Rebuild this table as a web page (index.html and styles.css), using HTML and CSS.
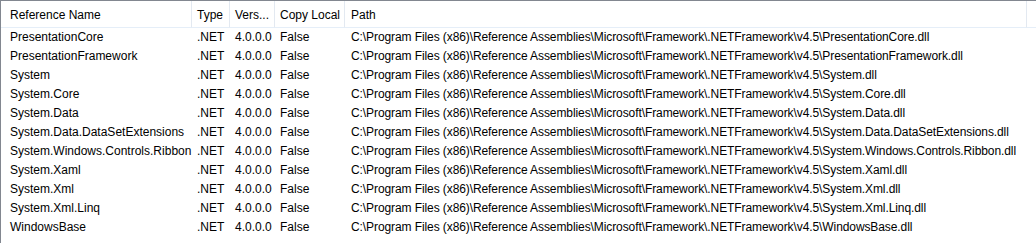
FILE: index.html
```html
<!DOCTYPE html>
<html>
<head>
<meta charset="utf-8">
<link rel="stylesheet" href="styles.css">
</head>
<body>
<div class="list">
  <table class="grid">
    <colgroup>
      <col class="c-name"><col class="c-type"><col class="c-ver"><col class="c-copy"><col class="c-path"><col class="c-rest">
    </colgroup>
    <thead>
      <tr>
        <th class="first">Reference Name</th>
        <th>Type</th>
        <th>Vers...</th>
        <th>Copy Local</th>
        <th class="path">Path</th>
        <th class="rest"></th>
      </tr>
    </thead>
    <tbody>
      <tr><td class="first">PresentationCore</td><td>.NET</td><td>4.0.0.0</td><td>False</td><td class="path">C:\Program Files (x86)\Reference Assemblies\Microsoft\Framework\.NETFramework\v4.5\PresentationCore.dll</td><td></td></tr>
      <tr><td class="first">PresentationFramework</td><td>.NET</td><td>4.0.0.0</td><td>False</td><td class="path">C:\Program Files (x86)\Reference Assemblies\Microsoft\Framework\.NETFramework\v4.5\PresentationFramework.dll</td><td></td></tr>
      <tr><td class="first">System</td><td>.NET</td><td>4.0.0.0</td><td>False</td><td class="path">C:\Program Files (x86)\Reference Assemblies\Microsoft\Framework\.NETFramework\v4.5\System.dll</td><td></td></tr>
      <tr><td class="first">System.Core</td><td>.NET</td><td>4.0.0.0</td><td>False</td><td class="path">C:\Program Files (x86)\Reference Assemblies\Microsoft\Framework\.NETFramework\v4.5\System.Core.dll</td><td></td></tr>
      <tr><td class="first">System.Data</td><td>.NET</td><td>4.0.0.0</td><td>False</td><td class="path">C:\Program Files (x86)\Reference Assemblies\Microsoft\Framework\.NETFramework\v4.5\System.Data.dll</td><td></td></tr>
      <tr><td class="first">System.Data.DataSetExtensions</td><td>.NET</td><td>4.0.0.0</td><td>False</td><td class="path">C:\Program Files (x86)\Reference Assemblies\Microsoft\Framework\.NETFramework\v4.5\System.Data.DataSetExtensions.dll</td><td></td></tr>
      <tr><td class="first">System.Windows.Controls.Ribbon</td><td>.NET</td><td>4.0.0.0</td><td>False</td><td class="path">C:\Program Files (x86)\Reference Assemblies\Microsoft\Framework\.NETFramework\v4.5\System.Windows.Controls.Ribbon.dll</td><td></td></tr>
      <tr><td class="first">System.Xaml</td><td>.NET</td><td>4.0.0.0</td><td>False</td><td class="path">C:\Program Files (x86)\Reference Assemblies\Microsoft\Framework\.NETFramework\v4.5\System.Xaml.dll</td><td></td></tr>
      <tr><td class="first">System.Xml</td><td>.NET</td><td>4.0.0.0</td><td>False</td><td class="path">C:\Program Files (x86)\Reference Assemblies\Microsoft\Framework\.NETFramework\v4.5\System.Xml.dll</td><td></td></tr>
      <tr><td class="first">System.Xml.Linq</td><td>.NET</td><td>4.0.0.0</td><td>False</td><td class="path">C:\Program Files (x86)\Reference Assemblies\Microsoft\Framework\.NETFramework\v4.5\System.Xml.Linq.dll</td><td></td></tr>
      <tr><td class="first">WindowsBase</td><td>.NET</td><td>4.0.0.0</td><td>False</td><td class="path">C:\Program Files (x86)\Reference Assemblies\Microsoft\Framework\.NETFramework\v4.5\WindowsBase.dll</td><td></td></tr>
    </tbody>
  </table>
</div>
</body>
</html>
```

FILE: styles.css
```css
html, body {
  margin: 0;
  padding: 0;
  background: #ffffff;
}
.list {
  width: 1035px;
  height: 242px;
  border-top: 1px solid #828790;
  border-left: 1px solid #828790;
  background: #ffffff;
  overflow: hidden;
  font-family: "Liberation Sans", Arial, sans-serif;
  font-size: 12px;
  color: #000000;
}
.grid {
  border-collapse: separate;
  border-spacing: 0;
  table-layout: fixed;
  width: 1035px;
}
.c-name { width: 191px; }
.c-type { width: 38px; }
.c-ver { width: 45px; }
.c-copy { width: 70px; }
.c-path { width: 682px; }
.c-rest { width: 9px; }
th {
  height: 23px;
  padding: 3px 0 0 5px;
  text-align: left;
  font-weight: normal;
  vertical-align: top;
  white-space: nowrap;
  overflow: hidden;
  border-right: 1px solid #e3e9f1;
  border-bottom: 1px solid #e5eef8;
  line-height: 23px;
}
th.rest { border-right: none; }
th.first, td.first { padding-left: 9px; }
td {
  height: 19px;
  padding: 0 0 0 5px;
  line-height: 19px;
  white-space: nowrap;
  overflow: hidden;
  vertical-align: middle;
}
th.path, td.path { padding-left: 6px; }
td.path { letter-spacing: -0.09px; }
```
